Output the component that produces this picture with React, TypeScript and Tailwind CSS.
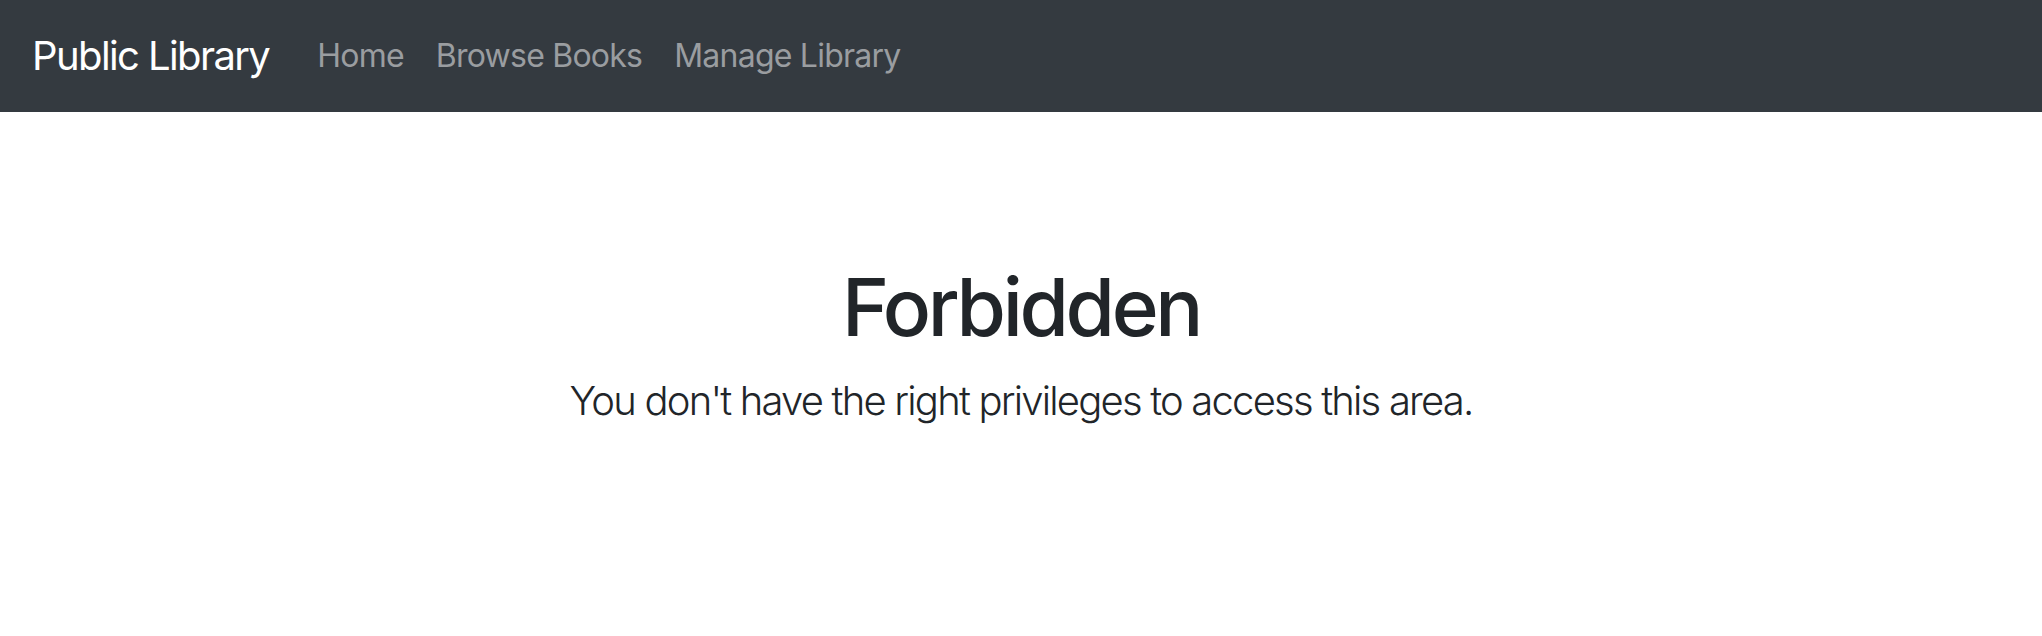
const links = ["Home", "Browse Books", "Manage Library"];

const App = () => {
  return (
    <div className="min-h-[636px] bg-white font-['Inter','Liberation_Sans',sans-serif] text-[#212529]">
      <nav className="flex items-center bg-[#343a40] px-8 py-4">
        <a className="mr-8 py-[10px] text-[40px] leading-[60px] tracking-[-0.04em] text-white">
          Public Library
        </a>
        <ul className="flex">
          {links.map((l) => (
            <li key={l}>
              <a className="block px-4 py-4 text-[32px] leading-[48px] tracking-[-0.024em] text-[#9a9da0]">
                {l}
              </a>
            </li>
          ))}
        </ul>
      </nav>
      <section className="pt-[147px] text-center">
        <h1 className="mb-4 text-[80px] font-medium leading-[96px] tracking-[-0.042em]">
          Forbidden
        </h1>
        <p className="text-[40px] font-light leading-[60px] tracking-[-0.045em]">
          You don't have the right privileges to access this area.
        </p>
      </section>
    </div>
  );
};

export default App;
